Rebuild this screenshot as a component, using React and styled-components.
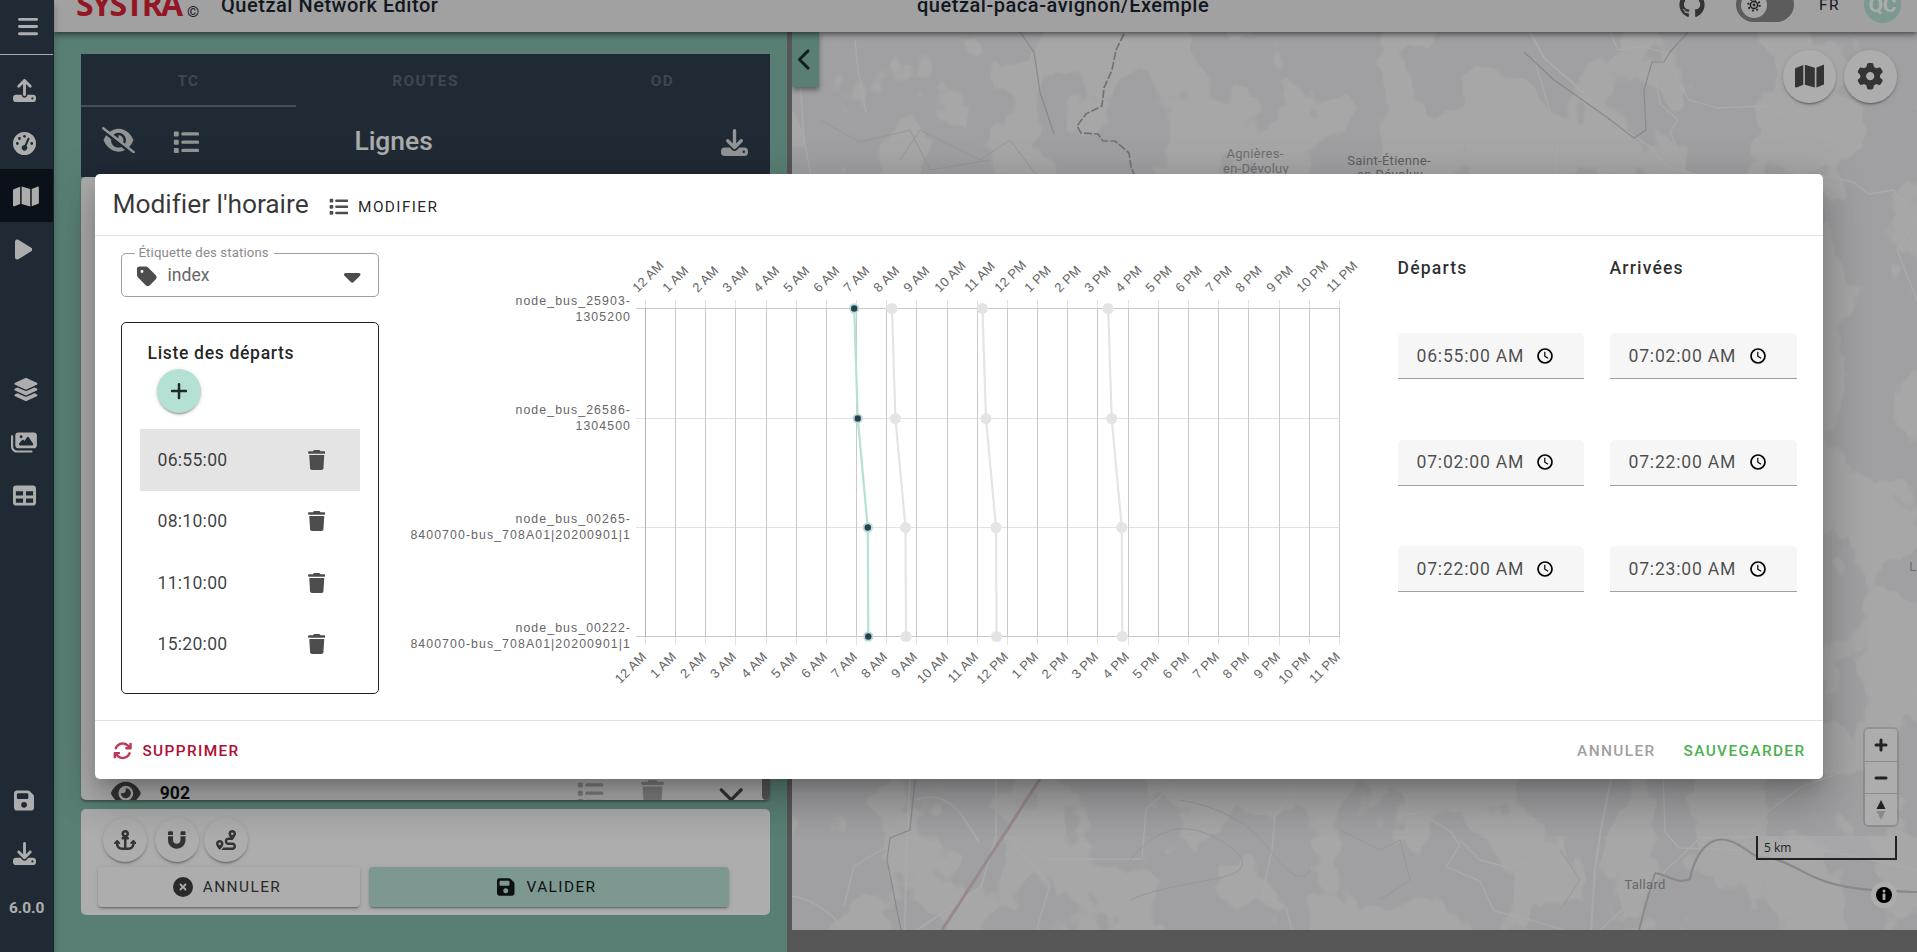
import React from 'react';
import styled, { createGlobalStyle, css } from 'styled-components';
import {
  FaUpload, FaGaugeHigh, FaMap, FaPlay, FaLayerGroup, FaImages, FaTable, FaFloppyDisk,
  FaDownload, FaEyeSlash, FaEye, FaList, FaBars, FaTag, FaCaretDown, FaTrash, FaArrowsRotate,
  FaAnchor, FaMagnet, FaRoute, FaCircleXmark, FaGithub, FaGear, FaPlus, FaChevronLeft, FaChevronDown,
} from 'react-icons/fa6';

const GlobalStyle = createGlobalStyle`
  * { box-sizing: border-box; }
  html, body { margin: 0; padding: 0; overflow: hidden; }
  body { font-family: Roboto, "Liberation Sans", sans-serif; font-size: 17.6px; color: rgba(0,0,0,.87); }
`;

const elevation2 = css`
  box-shadow: 0 3px 1px -2px rgba(0,0,0,.2), 0 2px 2px 0 rgba(0,0,0,.14), 0 1px 5px 0 rgba(0,0,0,.12);
`;

const Screen = styled.div`
  position: relative;
  display: flex;
  width: 1917px;
  height: 952px;
  overflow: hidden;
`;

/* Icons differ in width at one height: $ratio is width / height. */
const Icon = styled.span`
  display: inline-flex;
  flex: none;
  opacity: ${p => p.$opacity ?? 1};
  svg {
    display: block;
    width: ${p => p.$size * (p.$ratio ?? 1)}px;
    height: ${p => p.$size}px;
  }
`;

/* ---------- side navigation ---------- */
const Sidebar = styled.nav`
  display: flex;
  flex-direction: column;
  flex: none;
  width: 54px;
  background: #303f4e;
  border-right: 1px solid #2a3844;
  color: #fff;
  box-shadow: 0 3px 5px -1px rgba(0,0,0,.2), 0 6px 10px 0 rgba(0,0,0,.14);
  z-index: 3;
`;
const MenuButton = styled.div`
  display: flex;
  align-items: center;
  height: 55px;
  padding: 0 0 2px 18px;
  margin-bottom: 8px;
  border-bottom: 1px solid #fff;
`;
const NavItem = styled.div`
  display: flex;
  align-items: center;
  height: 53px;
  padding-left: ${p => p.$indent ?? 13}px;
  padding-top: 1px;
  background: ${p => (p.$active ? '#0f1a24' : 'transparent')};
`;
const NavGroup = styled.div`
  margin-top: ${p => p.$gap}px;
`;
const Version = styled.div`
  padding: 19px 0 0 9px;
  font-size: 15.4px;
  font-weight: 700;
  line-height: 20px;
`;

/* ---------- header ---------- */
const Page = styled.div`
  display: flex;
  flex-direction: column;
  flex: 1;
  min-width: 0;
`;
const Header = styled.header`
  display: flex;
  align-items: center;
  flex: none;
  height: 55px;
  margin-top: -23px;
  padding: 0 16px 0 22px;
  background: #ededed;
  color: #1a2430;
  box-shadow: 0 2px 4px -1px rgba(0,0,0,.35), 0 4px 5px 0 rgba(0,0,0,.2), 0 1px 10px 0 rgba(0,0,0,.15);
  z-index: 2;
`;
const Logo = styled.div`
  width: 109px;
  color: #db2136;
  font: 700 32px/40px "Open Sans", sans-serif;
  letter-spacing: -2px;
  padding-bottom: 1px;
`;
const Copyright = styled.span`
  width: 36px;
  padding: 14px 0 0 2px;
  font-size: 15.5px;
`;
const HeaderTitle = styled.div`
  width: ${p => p.$width}px;
  font-size: 20px;
  font-weight: 500;
  letter-spacing: .53px;
  white-space: nowrap;
`;
const HeaderTools = styled.div`
  display: flex;
  align-items: center;
  margin-left: auto;
  color: #4d4d4d;
`;
const ThemeSwitch = styled.div`
  display: flex;
  align-items: center;
  width: 58px;
  height: 35px;
  margin: 0 25px 0 31px;
  padding-left: 5px;
  border-radius: 18px;
  background: #888;
`;
const Knob = styled.span`
  display: flex;
  align-items: center;
  justify-content: center;
  width: 26px;
  height: 26px;
  border-radius: 50%;
  background: #f2f2f2;
  color: #333;
`;
const Language = styled.span`
  width: 45px;
  padding-top: 1px;
  color: #1a2430;
  font-size: 15.4px;
  letter-spacing: 1.37px;
`;
const Avatar = styled.span`
  display: flex;
  align-items: center;
  justify-content: center;
  width: 37px;
  height: 37px;
  border-radius: 50%;
  background: #b5e0d6;
  color: #fff;
  font-size: 21px;
  font-weight: 700;
  padding-top: 1px;
`;

/* ---------- left panel ---------- */
const Body = styled.main`
  display: flex;
  flex: 1;
  min-height: 0;
  background: #808080;
`;
const Panel = styled.section`
  display: flex;
  flex-direction: column;
  width: 733px;
  padding: 22px 17px 37px 27px;
  background: #84bbad;
`;
const Splitter = styled.div`
  width: 5px;
  background: #808080;
`;
const DarkHeader = styled.div`
  flex: none;
  height: 123px;
  background: #303f4e;
  color: #fff;
`;
const Tabs = styled.div`
  display: grid;
  grid-template-columns: repeat(3, 215px);
  column-gap: 22px;
  height: 53px;
`;
const Tab = styled.div`
  display: flex;
  align-items: center;
  justify-content: center;
  padding-top: 2px;
  border-bottom: 2px solid ${p => (p.$active ? '#69757f' : 'transparent')};
  color: #5c6973;
  font-size: 15.4px;
  font-weight: 700;
  letter-spacing: 1.37px;
`;
const PanelToolbar = styled.div`
  display: flex;
  align-items: center;
  height: 71px;
  padding: 0 22px 1px 21px;
  color: #d8dbde;
`;
const VisibilitySlot = styled.div`
  width: 71px;
`;
const PanelTitle = styled.div`
  flex: 1;
  padding: 0 0 2px 155px;
  color: #fff;
  font-size: 26.4px;
  font-weight: 500;
`;
const LinesCard = styled.div`
  display: flex;
  flex-direction: column;
  justify-content: flex-end;
  position: relative;
  flex: none;
  height: 623px;
  border-radius: 5px;
  background: #fff;
  overflow: hidden;
  box-shadow: 0 2px 2px rgba(0,0,0,.3);
`;
const LineRow = styled.div`
  display: flex;
  align-items: flex-start;
  height: 20px;
  padding: 0 26px 0 30px;
  color: #4d4d4d;
`;
const LineName = styled.div`
  flex: 1;
  padding: 3px 0 0 19px;
  color: #12161c;
  font-size: 17.6px;
  font-weight: 700;
  line-height: 20px;
`;
const Faded = styled.span`
  display: flex;
  margin-right: ${p => p.$gap}px;
  opacity: .38;
`;
const ScrollThumb = styled.div`
  position: absolute;
  right: 0;
  top: 0;
  bottom: 0;
  width: 8px;
  border-radius: 4px;
  background: #808080;
`;
const ActionCard = styled.div`
  flex: none;
  height: 106px;
  margin-top: 9px;
  padding: 9px 0 0 17px;
  border-radius: 5px;
  background: #fff;
`;
const RoundTools = styled.div`
  display: flex;
  padding-left: 5px;
  height: 49px;
`;
const RoundButton = styled.span`
  display: flex;
  align-items: center;
  justify-content: center;
  flex: none;
  width: ${p => p.$size}px;
  height: ${p => p.$size}px;
  margin-right: ${p => p.$gap ?? 0}px;
  border-radius: 50%;
  background: ${p => p.$color ?? '#fff'};
  color: ${p => p.$ink ?? '#4d4d4d'};
  ${elevation2}
`;
const Actions = styled.div`
  display: flex;
  gap: 9px;
`;
const BigButton = styled.div`
  display: flex;
  align-items: center;
  justify-content: center;
  gap: ${p => p.$gap}px;
  width: ${p => p.$width}px;
  height: 40px;
  padding-right: 4px;
  border-radius: 4px;
  background: ${p => p.$color};
  color: ${p => p.$ink};
  font-size: 15.4px;
  letter-spacing: 1.42px;
  font-weight: 400;
  ${elevation2}
`;

/* ---------- map ---------- */
const MapPane = styled.section`
  position: relative;
  width: 1125px;
  height: 898px;
  background: #f6f6f6;
  overflow: hidden;
`;
const MapCanvas = styled.svg`
  display: block;
`;
const CollapseTab = styled.div`
  position: absolute;
  top: 0;
  left: 0;
  display: flex;
  align-items: center;
  justify-content: center;
  width: 27px;
  height: 55px;
  padding-right: 1px;
  background: #84bbad;
  color: #1f2b30;
  box-shadow: 0 3px 5px rgba(0,0,0,.4);
`;
const MapTools = styled.div`
  position: absolute;
  top: 18px;
  right: 20px;
  display: flex;
`;
const Controls = styled.div`
  position: absolute;
  top: 695px;
  right: 18px;
  display: flex;
  flex-direction: column;
  width: 36px;
  border: 2px solid rgba(0,0,0,.12);
  border-radius: 6px;
  overflow: hidden;
`;
const Control = styled.div`
  display: flex;
  align-items: center;
  justify-content: center;
  height: 32px;
  background: #fff;
  & + & { border-top: 1px solid #ccc; }
`;
const Scale = styled.div`
  position: absolute;
  top: 804px;
  right: 20px;
  width: 141px;
  height: 24px;
  padding: 4px 0 0 6px;
  border: 2px solid #333;
  border-top: 0;
  background: rgba(255,255,255,.6);
  color: #333;
  font: 12px/15px "Open Sans", sans-serif;
`;
const Attribution = styled.div`
  position: absolute;
  top: 850px;
  right: 20px;
  display: flex;
  align-items: center;
  justify-content: center;
  width: 26px;
  height: 26px;
  border-radius: 50%;
  background: #fff;
`;

/* ---------- dialog ---------- */
const Scrim = styled.div`
  position: absolute;
  inset: 0;
  display: flex;
  align-items: center;
  justify-content: center;
  padding-top: 1px;
  background: rgba(0,0,0,.32);
  z-index: 10;
`;
const Dialog = styled.div`
  display: flex;
  flex-direction: column;
  width: 1728px;
  height: 605px;
  border-radius: 5px;
  background: #fff;
  box-shadow: 0 11px 15px -7px rgba(0,0,0,.2), 0 24px 38px 3px rgba(0,0,0,.14), 0 9px 46px 8px rgba(0,0,0,.12);
`;
const DialogHeader = styled.div`
  display: flex;
  align-items: center;
  height: 62px;
  padding: 0 0 0 18px;
  border-bottom: 1px solid #e1e1e1;
`;
const DialogTitle = styled.h1`
  width: 216px;
  margin: 0;
  padding-bottom: 1px;
  font-size: 26.4px;
  font-weight: 400;
  letter-spacing: -.05px;
  white-space: nowrap;
  color: rgba(0,0,0,.78);
`;
const TextButton = styled.span`
  display: inline-flex;
  align-items: center;
  gap: ${p => p.$gap ?? 10.5}px;
  padding-top: ${p => p.$drop ?? 1}px;
  color: ${p => p.$color ?? 'rgba(0,0,0,.87)'};
  font-size: 15.4px;
  font-weight: ${p => p.$weight ?? 400};
  letter-spacing: 1.37px;
`;
const DialogBody = styled.div`
  display: flex;
  flex: 1;
  min-height: 0;
`;
const DialogFooter = styled.div`
  display: flex;
  align-items: center;
  height: 59px;
  padding: 1px 17px 0 18px;
  border-top: 1px solid #e1e1e1;
`;
const FooterRight = styled.div`
  display: flex;
  gap: 28px;
  margin-left: auto;
`;
const LeftColumn = styled.div`
  width: 284px;
  padding: 9px 0 0 26px;
`;
const Select = styled.fieldset`
  display: flex;
  align-items: center;
  width: 258px;
  height: 52px;
  margin: 0 0 25px;
  padding: 0 17px 5px 14px;
  border: 1px solid #a0a0a0;
  border-radius: 5px;
  color: #4d4d4d;
`;
const SelectLabel = styled.legend`
  height: 16px;
  margin-left: -1px;
  padding: 0 5px 0 4px;
  color: #8a8a8a;
  font-size: 13.2px;
  line-height: 16px;
  letter-spacing: .12px;
`;
const SelectValue = styled.span`
  flex: 1;
  padding: 0 0 2px 10px;
  color: #666;
  font-size: 17.6px;
`;
const DepartureCard = styled.div`
  width: 258px;
  height: 372px;
  padding: 19px 18px 0;
  border: 1px solid #222;
  border-radius: 5px;
`;
const DepartureTitle = styled.h2`
  margin: 0 0 5px 8px;
  font-size: 17.6px;
  font-weight: 500;
  line-height: 22px;
  letter-spacing: .65px;
`;
const AddSlot = styled.div`
  padding-left: 17px;
  height: 60px;
`;
const DepartureRow = styled.div`
  display: flex;
  align-items: center;
  justify-content: space-between;
  height: 61.5px;
  padding: 0 34.5px 0 18px;
  background: ${p => (p.$selected ? '#e4e4e4' : 'transparent')};
  color: #4d4d4d;
`;
const DepartureTime = styled.span`
  color: rgba(0,0,0,.75);
  font-size: 17.6px;
  letter-spacing: .26px;
`;
const ChartArea = styled.div`
  width: 980px;
`;
const AxisText = styled.text`
  font-family: "Liberation Sans", Arial, sans-serif;
  font-size: ${p => (p.$slanted ? 13 : 12.3)}px;
  letter-spacing: ${p => (p.$slanted ? 0.2 : 1.09)}px;
  fill: #666;
`;
const Schedule = styled.div`
  display: grid;
  grid-template-columns: 186px 187px;
  grid-template-rows: 97px repeat(3, 106.5px);
  column-gap: 26px;
  padding-left: 39px;
`;
const ColumnTitle = styled.div`
  padding-top: 21px;
  font-size: 17.6px;
  font-weight: 500;
  line-height: 22px;
  letter-spacing: 1.15px;
  color: rgba(0,0,0,.82);
`;
const TimeField = styled.div`
  display: flex;
  align-items: center;
  justify-content: space-between;
  height: 46px;
  padding: 0 30px 0 19px;
  border-bottom: 1px solid #a0a0a0;
  border-radius: 5px 5px 0 0;
  background: #f6f6f6;
  color: rgba(0,0,0,.7);
  font-size: 17.6px;
  letter-spacing: .78px;
  white-space: nowrap;
`;

const STOPS = [
  { y: 308.5, text: 305, lines: ['node_bus_25903-', '1305200'] },
  { y: 418.5, text: 414, lines: ['node_bus_26586-', '1304500'] },
  { y: 527.5, text: 523, lines: ['node_bus_00265-', '8400700-bus_708A01|20200901|1'] },
  { y: 636.5, text: 632, lines: ['node_bus_00222-', '8400700-bus_708A01|20200901|1'] },
];
const OFFSETS = [0, 7, 27, 28];
const TRIPS = [490, 670, 920].map(start => ({ start, color: '#e3e4e5', dot: '#e3e4e5' }));
const SELECTED = { start: 415, color: '#b5e0d6', dot: '#2c3e50' };
const HOUR = 30.174;
const ORIGIN = 645.5;
const hourLabel = h => `${h % 12 === 0 ? 12 : h % 12} ${h < 12 ? 'AM' : 'PM'}`;

function Trip({ trip, selected }) {
  const pts = STOPS.map((s, i) => [ORIGIN + ((trip.start + OFFSETS[i]) / 60) * HOUR, s.y]);
  return (
    <g>
      <polyline points={pts.map(p => p.join(',')).join(' ')} fill="none" stroke={trip.color} strokeWidth="2.2" />
      {pts.map(([x, y], i) => (
        <circle key={i} cx={x} cy={y} r={selected ? 4.2 : 5.5} fill={trip.dot}
          stroke={selected ? trip.color : 'none'} strokeWidth="2" />
      ))}
    </g>
  );
}

function Chart() {
  const hours = Array.from({ length: 24 }, (_, h) => h);
  return (
    <ChartArea>
      <svg width="980" height="484" viewBox="379 236 980 484">
        {STOPS.map((s, i) => (
          <g key={s.y}>
            <line x1="636" x2="1340" y1={s.y} y2={s.y} stroke={i === 0 || i === 3 ? '#c8c8c8' : '#e2e2e2'} />
            {s.lines.map((l, k) => (
              <AxisText key={k} x="631" y={s.text + k * 16} textAnchor="end">{l}</AxisText>
            ))}
          </g>
        ))}
        {hours.map(h => {
          const x = h === 0 ? ORIGIN : Math.floor(ORIGIN + h * HOUR - 0.15) + 0.5;
          return (
            <g key={h}>
              <line x1={x} x2={x} y1="300" y2="308" stroke="#e2e2e2" />
              <line x1={x} x2={x} y1="637" y2="645" stroke="#e2e2e2" />
              <line x1={x} x2={x} y1="308" y2="637" stroke={h ? '#c8c8c8' : '#b4b4b4'} />
              <AxisText $slanted transform={`translate(${x - 7.8} 293) rotate(-45)`}>{hourLabel(h)}</AxisText>
              <AxisText $slanted textAnchor="end" transform={`translate(${x + 1.5} 657.5) rotate(-45)`}>{hourLabel(h)}</AxisText>
            </g>
          );
        })}
        {TRIPS.map(t => <Trip key={t.start} trip={t} />)}
        <Trip trip={SELECTED} selected />
      </svg>
    </ChartArea>
  );
}

function ClockIcon() {
  return (
    <svg width="18" height="18" viewBox="0 0 18 18" fill="none" stroke="#000">
      <circle cx="9" cy="9" r="7" strokeWidth="1.7" />
      <path d="M8.8 4.8v4.4l3.3 2" strokeWidth="1.2" />
    </svg>
  );
}

function Terrain() {
  return (
    <MapCanvas width="1125" height="898" viewBox="792 32 1125 898">
      <defs>
        <filter id="forest" x="0" y="0" width="100%" height="100%" colorInterpolationFilters="sRGB">
          <feTurbulence type="fractalNoise" baseFrequency="0.013 0.011" numOctaves="4" seed="23" />
          <feColorMatrix values="0 0 0 0 .926  0 0 0 0 .926  0 0 0 0 .938  30 0 0 0 -13.8" />
        </filter>
      </defs>
      <rect x="792" y="32" width="1125" height="898" filter="url(#forest)" />
      <g fill="none" stroke="#fbfbfb" strokeWidth="1.3" strokeLinejoin="round">
        <path d="M800 80l4 60 10 50 8 30 M855 40l3 30 8 42" />
        <path d="M1530 32l14 26 30 26 45 42 30 20 20 22 26 6 20 38" strokeWidth="2" />
        <path d="M1534 58l12 40 4 12 8 24-2 40" />
        <path d="M1667 60l22 40 28 8 50 -2 22 12" />
        <path d="M1610 32l8 18 24-4 26 8" />
        <path d="M1656 80l4 24 18 16-8 12 12 28 4 14" />
        <path d="M1827 176l26 6 16 12 24-4 24 30-20 30 24 60" />
        <path d="M1917 690l-20 34-20 12-18 30-60 22-34 26-26 36-60-2-14-16-2-60" />
        <path d="M1600 930l60-54 40-38 60-2 157 34" />
        <path d="M1611 779l-10 50-6 40-4 61" strokeWidth="2" />
        <path d="M1400 815l20-2 30 18 10 14-14 22 34 14 14 30 40 10 30 9 M1460 840l20 20 30 8 20-6" />
        <path d="M910 779l-4 80-1 71 M996 779l0 58-15 50-64 43 M915 800q26-10 46 14l18 28" strokeWidth="1.8" />
        <path d="M792 896q24 4 44 24l6 10 M888 846l-34 20-10 40" />
        <path d="M1288 779l4 16-17 20-3 35-10 45 24 12 6 24 20 8" />
        <path d="M1180 779l-34 30-4 50-96 0-40-24 44 50-12 40 0 30" />
      </g>
      <g fill="none" stroke="#dfdfe1" strokeWidth="1" strokeLinejoin="round">
        <path d="M820 120l40 22 50-12 20 40 60-10 M900 160l20-30 60 30 30-20 30 40" />
        <path d="M1130 860q40-50 90-20t-10 40-80 20 M1180 800q60 10 90 50t40 20" />
        <path d="M1340 830l40 20 20-10 10 40-30 20 M1560 850l20 30-20 30" />
      </g>
      <g fill="none" stroke="#cacacc" strokeWidth="1.2" strokeLinejoin="round">
        <path d="M1688 32l-18 20-6 10-12 0-8 28 2 40-12 8-26-20-54-38-30-28" />
        <path d="M1020 32l14 20 6 40 14 42 M915 779l-5 51-20 8-3 22 6 30 8 40" />
        <path d="M1639 930l8-30 8-27" strokeWidth="1.8" />
        <path d="M1655 873c14 2 22 12 35 6 4-20 16-46 40-38 14 4 22 16 30 16 20 0 40 14 54 20 30 14 70 14 103 15" strokeWidth="2.2" />
      </g>
      <path d="M1124 34l-8 16-4 20-8 18-2 18-16 8-9 12 4 7 17 1 5 7 12 0 14 12 2 14 6 14 2 20" fill="none" stroke="#a8a8aa" strokeWidth="1.7" strokeDasharray="8 2" />
      <path d="M1040 779l-98 151" fill="none" stroke="#e0cad2" strokeWidth="3" />
      <g fill="#a3a3a6" fontFamily="Roboto, sans-serif" fontSize="13" textAnchor="middle" letterSpacing=".3">
        <text x="1255" y="158">Agnières-</text>
        <text x="1256" y="172.5">en-Dévoluy</text>
        <text x="1389" y="165" fill="#8c8c90">Saint-Étienne-</text>
        <text x="1390" y="179" fill="#8c8c90">en-Dévoluy</text>
        <text x="1645" y="889" fill="#9a9a9e">Tallard</text>
        <text x="1913" y="571">L</text>
      </g>
    </MapCanvas>
  );
}

export default function App() {
  const departures = ['06:55:00', '08:10:00', '11:10:00', '15:20:00'];
  const times = ['06:55:00 AM', '07:02:00 AM', '07:02:00 AM', '07:22:00 AM', '07:22:00 AM', '07:23:00 AM'];
  return (
    <>
      <GlobalStyle />
      <Screen>
        <Sidebar>
          <MenuButton><Icon $size={23} $ratio={0.875}><FaBars /></Icon></MenuButton>
          <NavItem><Icon $size={23}><FaUpload /></Icon></NavItem>
          <NavItem><Icon $size={23}><FaGaugeHigh /></Icon></NavItem>
          <NavItem $active><Icon $size={23} $ratio={1.125}><FaMap /></Icon></NavItem>
          <NavItem $indent={15}><Icon $size={23} $ratio={0.75}><FaPlay /></Icon></NavItem>
          <NavGroup $gap={87}>
            <NavItem><Icon $size={23} $ratio={1.125}><FaLayerGroup /></Icon></NavItem>
            <NavItem $indent={11}><Icon $size={23} $ratio={1.125}><FaImages /></Icon></NavItem>
            <NavItem><Icon $size={23}><FaTable /></Icon></NavItem>
          </NavGroup>
          <NavGroup $gap={252}>
            <NavItem $indent={14}><Icon $size={23} $ratio={0.875}><FaFloppyDisk /></Icon></NavItem>
            <NavItem><Icon $size={23}><FaDownload /></Icon></NavItem>
            <Version>6.0.0</Version>
          </NavGroup>
        </Sidebar>
        <Page>
          <Header>
            <Logo>SYSTRA</Logo>
            <Copyright>©</Copyright>
            <HeaderTitle $width={696}>Quetzal Network Editor</HeaderTitle>
            <HeaderTitle>quetzal-paca-avignon/Exemple</HeaderTitle>
            <HeaderTools>
              <Icon $size={26}><FaGithub /></Icon>
              <ThemeSwitch>
                <Knob>
                  <svg width="14" height="14" viewBox="0 0 14 14" fill="none" stroke="currentColor">
                    <circle cx="7" cy="7" r="3.6" strokeWidth="1.6" />
                    <circle cx="7" cy="7" r="5.7" strokeWidth="2" strokeDasharray="1.8 2.68" />
                    <circle cx="7" cy="7" r="1.4" fill="currentColor" stroke="none" />
                  </svg>
                </Knob>
              </ThemeSwitch>
              <Language>FR</Language>
              <Avatar>QC</Avatar>
            </HeaderTools>
          </Header>
          <Body>
            <Panel>
              <DarkHeader>
                <Tabs>
                  <Tab $active>TC</Tab>
                  <Tab>ROUTES</Tab>
                  <Tab>OD</Tab>
                </Tabs>
                <PanelToolbar>
                  <VisibilitySlot><Icon $size={26.4} $ratio={1.25}><FaEyeSlash /></Icon></VisibilitySlot>
                  <Icon $size={26.4}><FaList /></Icon>
                  <PanelTitle>Lignes</PanelTitle>
                  <Icon $size={27}><FaDownload /></Icon>
                </PanelToolbar>
              </DarkHeader>
              <LinesCard>
                <LineRow>
                  <Icon $size={26.4} $ratio={1.125}><FaEye /></Icon>
                  <LineName>902</LineName>
                  <Faded $gap={37}><Icon $size={26.4}><FaList /></Icon></Faded>
                  <Faded $gap={54}><Icon $size={26.4} $ratio={0.875}><FaTrash /></Icon></Faded>
                  <Icon $size={26.4}><FaChevronDown /></Icon>
                </LineRow>
                <ScrollThumb />
              </LinesCard>
              <ActionCard>
                <RoundTools>
                  <RoundButton $size={44} $gap={8}><Icon $size={20} $ratio={1.125}><FaAnchor /></Icon></RoundButton>
                  <RoundButton $size={44} $gap={5}><Icon $size={20} $ratio={0.875}><FaMagnet /></Icon></RoundButton>
                  <RoundButton $size={44}><Icon $size={20}><FaRoute /></Icon></RoundButton>
                </RoundTools>
                <Actions>
                  <BigButton $width={262} $gap={10} $color="#fff" $ink="#3d3d3d">
                    <Icon $size={20}><FaCircleXmark /></Icon>ANNULER
                  </BigButton>
                  <BigButton $width={360} $gap={11.5} $color="#b9e0d5" $ink="#14191a">
                    <Icon $size={20} $ratio={0.875}><FaFloppyDisk /></Icon>VALIDER
                  </BigButton>
                </Actions>
              </ActionCard>
            </Panel>
            <Splitter />
            <MapPane>
              <Terrain />
              <CollapseTab><Icon $size={23} $ratio={0.625}><FaChevronLeft /></Icon></CollapseTab>
              <MapTools>
                <RoundButton $size={53} $gap={8}><Icon $size={26.4} $ratio={1.125}><FaMap /></Icon></RoundButton>
                <RoundButton $size={53}><Icon $size={26.4}><FaGear /></Icon></RoundButton>
              </MapTools>
              <Controls>
                <Control>
                  <svg width="14" height="14" stroke="#333" strokeWidth="3" strokeLinecap="round"><path d="M7 2v10M2 7h10" /></svg>
                </Control>
                <Control>
                  <svg width="14" height="14" stroke="#333" strokeWidth="3" strokeLinecap="round"><path d="M2 7h10" /></svg>
                </Control>
                <Control>
                  <svg width="10" height="20"><path d="M5 0l4.5 9h-9z" fill="#333" /><path d="M5 20l4.5-9h-9z" fill="#ccc" /></svg>
                </Control>
              </Controls>
              <Scale>5 km</Scale>
              <Attribution>
                <svg width="16" height="16" viewBox="0 0 16 16">
                  <circle cx="8" cy="8" r="8" />
                  <circle cx="8" cy="4" r="1.5" fill="#fff" />
                  <rect x="6.6" y="6.5" width="2.8" height="6.5" rx=".8" fill="#fff" />
                </svg>
              </Attribution>
            </MapPane>
          </Body>
        </Page>
        <Scrim>
          <Dialog role="dialog">
            <DialogHeader>
              <DialogTitle>Modifier l'horaire</DialogTitle>
              <TextButton $gap={10} $drop={4}><Icon $size={19.6} $opacity={0.8}><FaList /></Icon>MODIFIER</TextButton>
            </DialogHeader>
            <DialogBody>
              <LeftColumn>
                <Select>
                  <SelectLabel>Étiquette des stations</SelectLabel>
                  <Icon $size={23} $ratio={0.96}><FaTag /></Icon>
                  <SelectValue>index</SelectValue>
                  <Icon $size={26.4} $ratio={0.625}><FaCaretDown /></Icon>
                </Select>
                <DepartureCard>
                  <DepartureTitle>Liste des départs</DepartureTitle>
                  <AddSlot>
                    <RoundButton $size={44} $color="#b5e0d6" $ink="#1f2b28"><Icon $size={20}><FaPlus /></Icon></RoundButton>
                  </AddSlot>
                  {departures.map((d, i) => (
                    <DepartureRow key={d} $selected={i === 0}>
                      <DepartureTime>{d}</DepartureTime>
                      <Icon $size={20} $ratio={0.875}><FaTrash /></Icon>
                    </DepartureRow>
                  ))}
                </DepartureCard>
              </LeftColumn>
              <Chart />
              <Schedule>
                <ColumnTitle>Départs</ColumnTitle>
                <ColumnTitle>Arrivées</ColumnTitle>
                {times.map((t, i) => <TimeField key={i}>{t}<ClockIcon /></TimeField>)}
              </Schedule>
            </DialogBody>
            <DialogFooter>
              <TextButton $color="#b00d33" $weight={500}>
                <Icon $size={19.4} $opacity={0.82}><FaArrowsRotate /></Icon>SUPPRIMER
              </TextButton>
              <FooterRight>
                <TextButton $color="#a0a0a0" $weight={500}>ANNULER</TextButton>
                <TextButton $color="#4caf50" $weight={500}>SAUVEGARDER</TextButton>
              </FooterRight>
            </DialogFooter>
          </Dialog>
        </Scrim>
      </Screen>
    </>
  );
}
